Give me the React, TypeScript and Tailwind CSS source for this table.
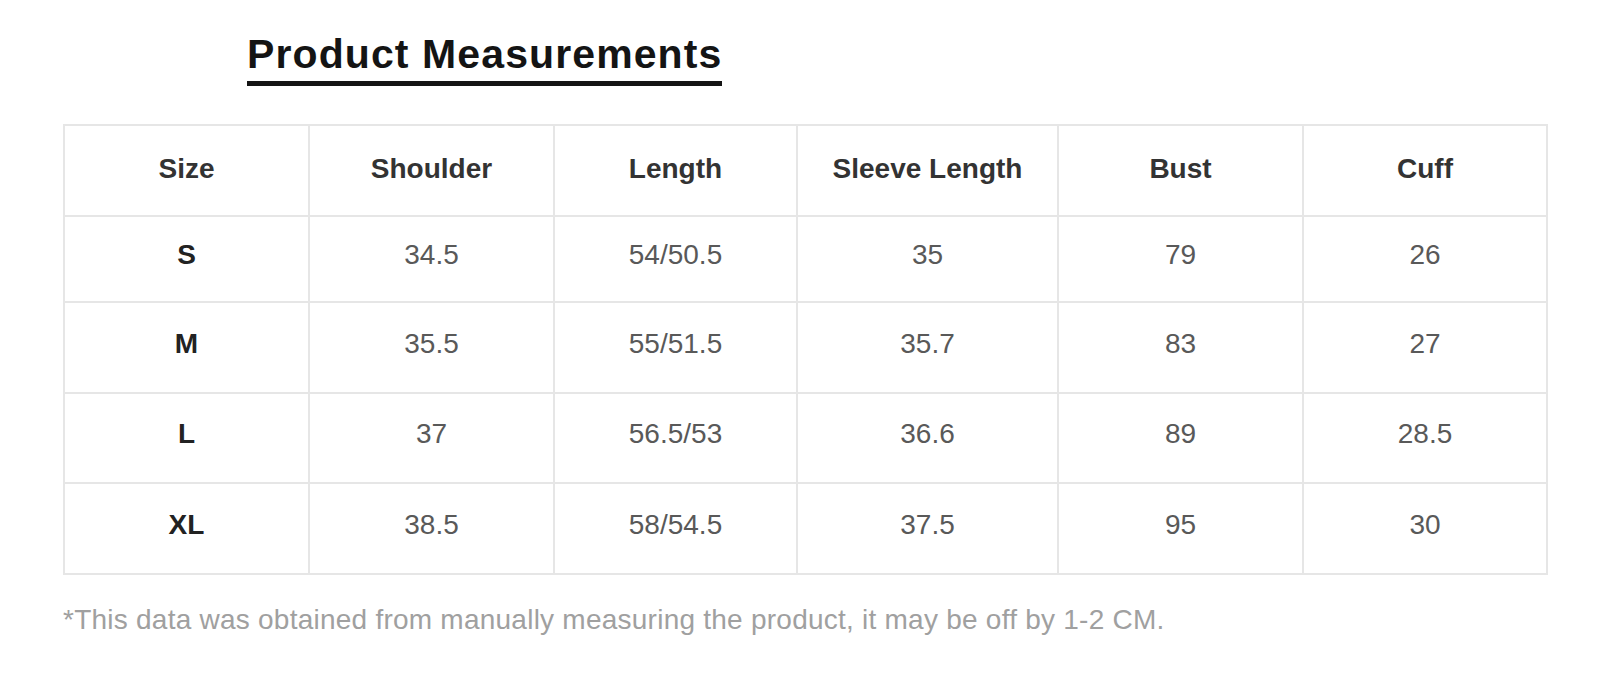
const headers = ['Size', 'Shoulder', 'Length', 'Sleeve Length', 'Bust', 'Cuff']

const rows = [
  ['S', '34.5', '54/50.5', '35', '79', '26'],
  ['M', '35.5', '55/51.5', '35.7', '83', '27'],
  ['L', '37', '56.5/53', '36.6', '89', '28.5'],
  ['XL', '38.5', '58/54.5', '37.5', '95', '30'],
]

const rowHeights = ['h-[84px]', 'h-[89px]', 'h-[88px]', 'h-[89px]']

const Cell = ({ children, className }: { children: React.ReactNode; className: string }) => (
  <div className={`flex items-center justify-center bg-white text-[28px] leading-none ${className}`}>
    {children}
  </div>
)

const App = () => {
  return (
    <div
      className="w-[1601px] h-[677px] bg-white overflow-hidden"
      style={{ fontFamily: '"Liberation Sans", Arial, sans-serif' }}
    >
      <div className="pt-[34px] pl-[247px]">
        <h1 className="inline-block border-b-[5px] border-[#141414] pb-[6px] text-[41px] font-bold leading-none tracking-[1.1px] text-[#141414]">
          Product Measurements
        </h1>
      </div>

      <div className="ml-[63px] mt-[38px] w-fit grid grid-cols-[243px_243px_241px_259px_243px_242px] gap-[2px] border-2 border-[#e6e6e6] bg-[#e6e6e6]">
        {headers.map((h) => (
          <Cell key={h} className="h-[89px] pb-[4px] font-bold text-[#333]">
            {h}
          </Cell>
        ))}
        {rows.map((row, r) =>
          row.map((v, c) => (
            <Cell
              key={`${r}-${c}`}
              className={`${rowHeights[r]} pb-[8px] ${c === 0 ? 'font-bold text-[#222]' : 'text-[#595959]'}`}
            >
              {v}
            </Cell>
          ))
        )}
      </div>

      <p className="ml-[63px] mt-[31px] text-[28px] leading-none tracking-[0.24px] text-[#a0a0a0]">
        *This data was obtained from manually measuring the product, it may be off by 1-2 CM.
      </p>
    </div>
  )
}

export default App
